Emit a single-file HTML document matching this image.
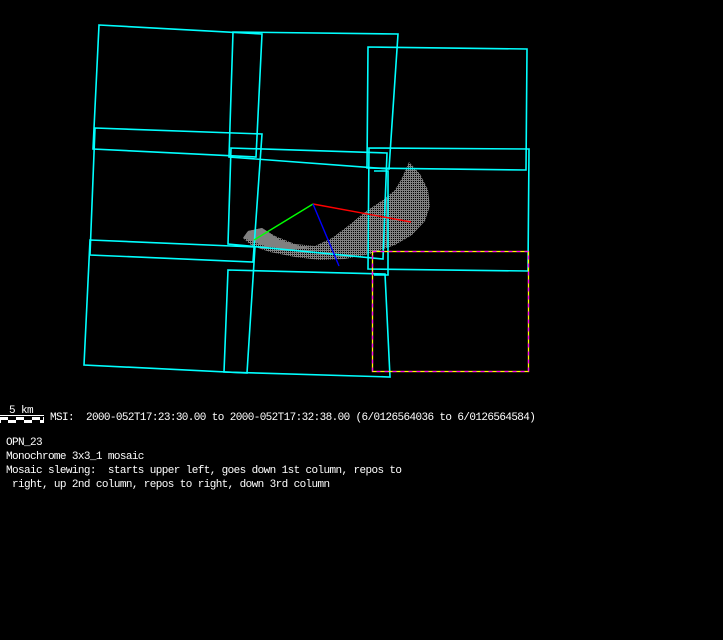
<!DOCTYPE html>
<html><head><meta charset="utf-8"><style>
html,body{margin:0;padding:0;background:#000;width:723px;height:640px;overflow:hidden}
svg{display:block}
text{font-family:"Liberation Mono",monospace;font-size:11px;fill:#fff;letter-spacing:-0.61px;white-space:pre}
</style></head><body>
<svg width="723" height="640" viewBox="0 0 723 640" xmlns="http://www.w3.org/2000/svg" xml:space="preserve">
<defs>
<pattern id="dots" width="2" height="2" patternUnits="userSpaceOnUse">
<rect width="2" height="2" fill="#808080"/><rect x="1" y="1" width="1" height="1" fill="#000"/>
</pattern>
</defs>
<path d="M409,162 L420,174 L428,190 L430,206 L425,221 L412,235 L395,245 L370,254 L345,259 L320,260 L295,257 L270,252 L252,246 L243,238 L248,231 L262,228 L275,236 L295,244 L315,246 L332,238 L348,226 L365,212 L383,200 L395,190 L402,178 Z" fill="url(#dots)"/>
<path d="M243,238 L248,231 L262,228 L280,240 L300,246 L310,248 L290,250 L265,246 Z" fill="#808080"/>
<g fill="none" stroke="#00ffff" stroke-width="1.6">
<polygon points="99,25 262,34 256,157 93,149"/>
<polygon points="95,128 262,134 253,262 90,255"/>
<polygon points="90,240 255,247 247,373 84,365"/>
<polygon points="233,32 398,34 389,169 229,157"/>
<polygon points="231,148 387,153 383,259 228,244"/>
<polygon points="228,270 385,274 390,377 224,372"/>
<polygon points="368,47 527,49 526,170 367,168"/>
<polygon points="369,148 529,149 528,271 368,269"/>
<polyline points="374,171 388,171 388,275 374,275"/>
</g>
<rect x="372.5" y="251.5" width="156" height="120" fill="none" stroke="#ffff00" stroke-width="1.3"/>
<rect x="372.5" y="251.5" width="156" height="120" fill="none" stroke="#ff00ff" stroke-width="1.3" stroke-dasharray="4,4"/>
<g stroke-width="1.4">
<line x1="313" y1="204" x2="411" y2="222" stroke="#ff0000"/>
<line x1="313" y1="204" x2="254" y2="240" stroke="#00ff00"/>
<line x1="313" y1="204" x2="339" y2="266" stroke="#0000ff"/>
</g>
<rect x="0" y="415" width="44" height="1" fill="#fff"/>
<g fill="#fff">
<rect x="0" y="417" width="8" height="3"/><rect x="16" y="417" width="8" height="3"/><rect x="32" y="417" width="8" height="3"/>
<rect x="8" y="420" width="8" height="3"/><rect x="24" y="420" width="8" height="3"/><rect x="40" y="420" width="4" height="3"/>
<rect x="0" y="420" width="1" height="3"/><rect x="43" y="417" width="1" height="3"/>
</g>
<text x="9" y="413">5 km</text>
<text x="50" y="420">MSI:  2000-052T17:23:30.00 to 2000-052T17:32:38.00 (6/0126564036 to 6/0126564584)</text>
<text x="6" y="445">OPN_23</text>
<text x="6" y="459">Monochrome 3x3_1 mosaic</text>
<text x="6" y="473">Mosaic slewing:  starts upper left, goes down 1st column, repos to</text>
<text x="6" y="487"> right, up 2nd column, repos to right, down 3rd column</text>
</svg>
</body></html>
